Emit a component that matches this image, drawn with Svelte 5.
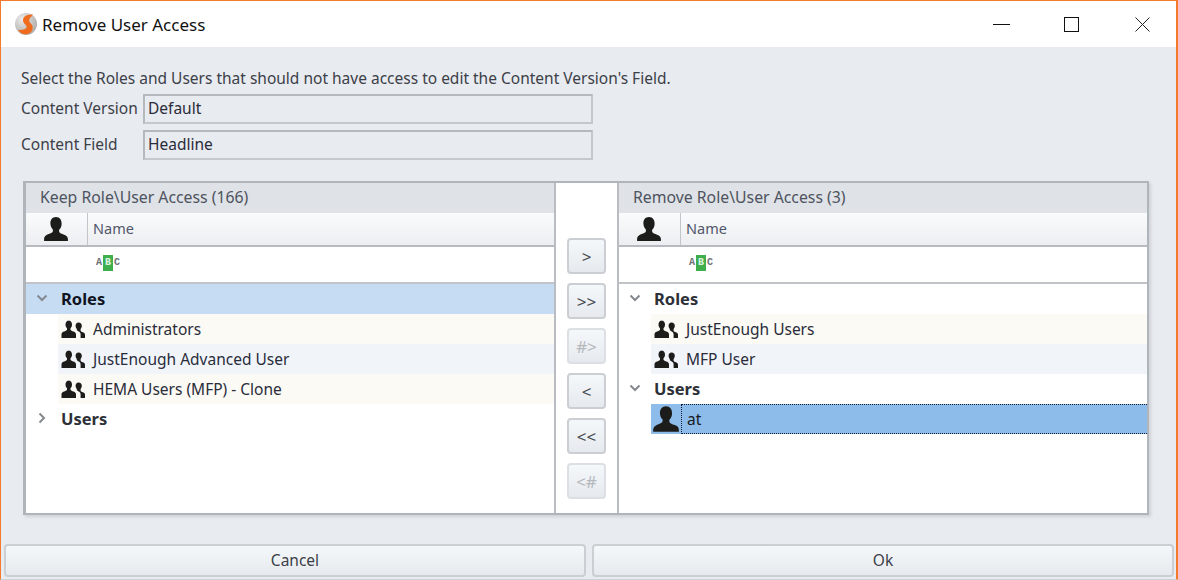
<script>
  const keepRoles = ['Administrators', 'JustEnough Advanced User', 'HEMA Users (MFP) - Clone'];
  const removeRoles = ['JustEnough Users', 'MFP User'];
  const moves = [
    { label: '>', off: false },
    { label: '>>', off: false },
    { label: '#>', off: true },
    { label: '<', off: false },
    { label: '<<', off: false },
    { label: '<#', off: true }
  ];
</script>

{#snippet person(size)}
  <svg class="icon" width={size} height={size} viewBox="0 0 24 24">
    <path fill="#1c1c1a" d="M12 1c-3.400 0-5.200 2.600-5.200 5.800 0 2.400.9 4.400 2.300 5.600v1.800c-.6 1.200-2.400 1.900-4.600 2.700C2.200 18.100 1 19.200 1 21.200V23h22v-1.800c0-2-1.200-3.100-3.500-4-2.200-.8-4-1.500-4.600-2.700v-1.800c1.400-1.200 2.300-3.200 2.300-5.600C17.200 3.600 15.400 1 12 1z"/>
  </svg>
{/snippet}

{#snippet people()}
  <svg class="icon" width="24" height="20" viewBox="0 0 24 20">
    <path fill="#1c1c1a" d="M8 1.500c-2.300 0-3.500 1.800-3.500 4 0 1.600.6 3 1.500 3.800v1.400c-.4.900-1.600 1.300-3 1.900C1.200 13.300.5 14.200.5 15.500V19h14.500v-3.500c0-1.300-.7-2.200-2.500-2.900-1.400-.6-2.600-1-3-1.900V9.300c.9-.8 1.500-2.200 1.500-3.800 0-2.200-1.200-4-3.500-4z"/>
    <path fill="#1c1c1a" d="M17.500 3.500c-1.900 0-2.900 1.500-2.900 3.300 0 1.300.5 2.500 1.200 3.100v1.200c.2.500 1 .9 1.800 1.300 1.500.7 2 1.600 2 3V19H24v-3.300c0-1.100-.6-1.800-2-2.400-1.200-.5-2.100-.8-2.400-1.600V9.900c.7-.6 1.200-1.800 1.200-3.100 0-1.800-1-3.300-3.300-3.300z"/>
  </svg>
{/snippet}

{#snippet abc()}
  <span class="abc"><span>A</span><b>B</b><span>C</span></span>
{/snippet}

{#snippet chevron(open)}
  <svg class="chev" width="12" height="12" viewBox="0 0 12 12">
    {#if open}
      <path d="M1.500 3.500 6 8l4.500-4.500" fill="none" stroke="#85898f" stroke-width="2"/>
    {:else}
      <path d="M3.500 1.500 8 6l-4.500 4.500" fill="none" stroke="#85898f" stroke-width="2"/>
    {/if}
  </svg>
{/snippet}

{#snippet gridHead(title)}
  <div class="caption">{title}</div>
  <div class="cols">
    <div class="col-icon">{@render person(26)}</div>
    <div class="col-name">Name</div>
  </div>
  <div class="filter">{@render abc()}</div>
{/snippet}

{#snippet role(name, i)}
  <div class="row" class:alt={i % 2 === 1}>
    {@render people()}
    <span>{name}</span>
  </div>
{/snippet}

<div class="window">
  <header class="titlebar">
    <svg class="logo" width="24" height="24" viewBox="0 0 24 24">
      <defs>
        <radialGradient id="ball" cx="0.35" cy="0.3" r="0.8">
          <stop offset="0" stop-color="#ececea"/>
          <stop offset="1" stop-color="#a9a5a2"/>
        </radialGradient>
      </defs>
      <circle cx="12" cy="12" r="11" fill="url(#ball)"/>
      <path fill="#ef6c1e" d="M19 2.500c-5 0-9.500 1-10 5.500-.3 3 3 4.500 3.500 6.500.4 2-2 3.500-8.500 3.500 2 3.500 6 4.800 9.500 4 4-1 5.800-4.500 5-7.800-.6-2.600-3.500-3.700-3.300-6 .1-2 2.300-3.700 3.800-5.700z"/>
    </svg>
    <span class="title">Remove User Access</span>
    <div class="winbtns">
      <svg width="17" height="15" viewBox="0 0 17 15"><path d="M0 7.500h17" stroke="#111"/></svg>
      <svg width="15" height="15" viewBox="0 0 15 15"><rect x=".5" y=".5" width="14" height="14" fill="none" stroke="#111"/></svg>
      <svg width="15" height="15" viewBox="0 0 15 15"><path d="M.5.500l14 14M14.500.500l-14 14" stroke="#222"/></svg>
    </div>
  </header>

  <main class="body">
    <p class="hint">Select the Roles and Users that should not have access to edit the Content Version's Field.</p>
    <div class="field"><label for="cv">Content Version</label><div id="cv" class="readonly">Default</div></div>
    <div class="field"><label for="cf">Content Field</label><div id="cf" class="readonly">Headline</div></div>

    <section class="lists">
      <div class="pane">
        {@render gridHead('Keep Role\\User Access (166)')}
        <div class="tree">
          <div class="group selected">{@render chevron(true)}<span>Roles</span></div>
          {#each keepRoles as name, i}{@render role(name, i)}{/each}
          <div class="group">{@render chevron(false)}<span>Users</span></div>
        </div>
      </div>

      <div class="moves">
        {#each moves as m}
          <button class="move" class:off={m.off}>{m.label}</button>
        {/each}
      </div>

      <div class="pane">
        {@render gridHead('Remove Role\\User Access (3)')}
        <div class="tree">
          <div class="group">{@render chevron(true)}<span>Roles</span></div>
          {#each removeRoles as name, i}{@render role(name, i)}{/each}
          <div class="group">{@render chevron(true)}<span>Users</span></div>
          <div class="row user">
            <div class="user-icon">{@render person(28)}</div>
            <span class="focus">at</span>
          </div>
        </div>
      </div>
    </section>
  </main>

  <footer class="actions">
    <button class="action">Cancel</button>
    <button class="action">Ok</button>
  </footer>
</div>

<style>
  :global(body) {
    margin: 0;
    background: #e8ebf0;
  }
  .window {
    box-sizing: border-box;
    width: 1178px;
    height: 580px;
    display: flex;
    flex-direction: column;
    background: #e8ebf0;
    border: 1px solid #f47a2c;
    border-bottom: 1px solid #cdd0d5;
    border-right-width: 2px;
    font-family: "Noto Sans", "Open Sans", sans-serif;
    font-size: 15.5px;
    color: #3c4048;
    overflow: hidden;
  }
  .titlebar {
    flex: none;
    height: 46px;
    background: #fff;
    display: flex;
    align-items: center;
    padding-left: 13px;
  }
  .logo { flex: none; margin-right: 4px; }
  .title {
    font-size: 17px;
    color: #111;
  }
  .winbtns {
    margin-left: auto;
    display: flex;
    align-items: center;
    padding-right: 26px;
  }
  .winbtns svg:nth-child(2) { margin: 0 56px 0 54px; }
  .body {
    flex: 1;
    min-height: 0;
    padding: 19px 0 0 20px;
    display: flex;
    flex-direction: column;
  }
  .hint {
    margin: 0;
    height: 28px;
    line-height: 24px;
    white-space: nowrap;
  }
  .field {
    display: flex;
    align-items: center;
    height: 30px;
    margin-bottom: 6px;
  }
  .field label {
    width: 122px;
    flex: none;
    padding-bottom: 2px;
  }
  .readonly {
    box-sizing: border-box;
    width: 450px;
    height: 30px;
    line-height: 24px;
    padding-left: 3px;
    border: 2px solid #b4b9bf;
    border-right-color: #c4c8cc;
    border-bottom-color: #c4c8cc;
    color: #2a2c3a;
  }
  .lists {
    box-sizing: border-box;
    width: 1126px;
    height: 334px;
    margin: 15px 0 0 2px;
    display: flex;
    border: 2px solid #b0b5bb;
    border-left-width: 3px;
    background: #b9bdc3;
    gap: 2px;
    box-shadow: 2px 2px 3px #cfd2d7;
  }
  .pane {
    flex: 1;
    min-width: 0;
    background: #fff;
    display: flex;
    flex-direction: column;
  }
  .caption {
    flex: none;
    height: 30px;
    line-height: 28px;
    padding-left: 14px;
    background: #dfe2e6;
    color: #4d5360;
    font-size: 15.800px;
    white-space: nowrap;
  }
  .cols {
    flex: none;
    height: 32px;
    display: flex;
    background: linear-gradient(#fafbfc, #eceef1);
    border-bottom: 2px solid #b7bbc1;
  }
  .col-icon {
    box-sizing: border-box;
    width: 62px;
    padding-right: 2px;
    display: flex;
    align-items: center;
    justify-content: center;
    border-right: 1px solid #c2c6cb;
  }
  .col-name {
    padding-left: 5px;
    line-height: 30px;
    font-size: 14.500px;
    color: #50566a;
  }
  .filter {
    flex: none;
    height: 31px;
    padding-left: 70px;
    display: flex;
    align-items: center;
  }
  .abc {
    display: inline-flex;
    align-items: center;
    gap: 1px;
    font-family: "Liberation Mono", monospace;
    font-size: 10px;
    font-weight: 700;
    color: #6c7076;
  }
  .abc b {
    width: 10px;
    height: 16px;
    line-height: 16px;
    text-align: center;
    background: #3fae4c;
    color: #dff3e2;
  }
  .tree {
    flex: 1;
    border-top: 2px solid #c0c4c9;
    margin-top: 4px;
  }
  .group {
    box-sizing: border-box;
    height: 30px;
    padding: 0 0 2px 10px;
    display: flex;
    align-items: center;
    font-weight: 700;
    font-size: 16.500px;
    color: #2d3038;
  }
  .group span { margin-left: 13px; }
  .group.selected { background: #c6dcf3; color: #101420; }
  .chev { flex: none; }
  .row {
    height: 30px;
    margin-left: 32px;
    display: flex;
    align-items: center;
    padding-left: 3px;
    background: #fbfaf4;
    color: #2a2c3a;
  }
  .row.alt { background: #f1f5fa; }
  .row .icon { margin-right: 8px; flex: none; }
  .row.user {
    padding-left: 0;
    background: #8dbbea;
  }
  .user-icon {
    flex: none;
    width: 30px;
    height: 30px;
    display: flex;
    align-items: center;
    justify-content: center;
  }
  .user-icon .icon { margin: 0; }
  .focus {
    box-sizing: border-box;
    flex: 1;
    height: 30px;
    line-height: 28px;
    padding-left: 5px;
    border: 1px dotted #0d1a33;
    border-right: 0;
    color: #16181f;
  }
  .moves {
    flex: none;
    width: 61px;
    background: #fff;
    display: flex;
    flex-direction: column;
    align-items: center;
    padding-top: 55px;
    gap: 9px;
  }
  .move {
    box-sizing: border-box;
    width: 39px;
    height: 36px;
    padding: 0;
    background: linear-gradient(#f5f8fb, #e6e9ed);
    border: 2px solid #cbced3;
    border-radius: 4px;
    font: inherit;
    font-size: 17px;
    color: #454a52;
  }
  .move.off { color: #b5b8bd; border-color: #dcdfe3; }
  .actions {
    flex: none;
    height: 33px;
    display: flex;
    gap: 6px;
    padding: 0 2px 2px 3px;
  }
  .action {
    flex: 1;
    height: 33px;
    box-sizing: border-box;
    padding-bottom: 3px;
    background: linear-gradient(#f5f8fb, #e6e9ed);
    border: 2px solid #cbced3;
    border-radius: 4px;
    font: inherit;
    color: #3c4048;
  }
</style>
